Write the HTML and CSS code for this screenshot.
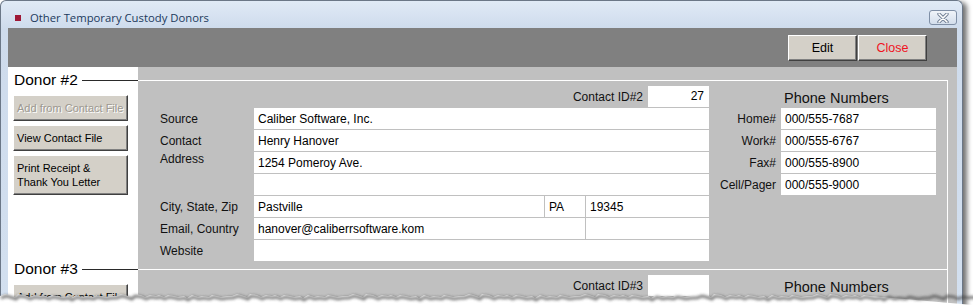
FILE: index.html
```html
<!DOCTYPE html>
<html lang="en">
<head>
    <meta charset="UTF-8">
    <meta name="viewport" content="width=device-width, initial-scale=1.0">
    <title>Other Temporary Custody Donors</title>
    <link rel="stylesheet" href="styles.css">
</head>
<body>
    <div class="window">
        <!-- Title bar -->
        <div class="titlebar">
            <span class="app-icon"></span>
            <span class="title">Other Temporary Custody Donors</span>
            <button class="win-close" type="button">
                <svg width="12" height="10" viewBox="0 0 12 10">
                    <path d="M2,1 L10,9 M10,1 L2,9" stroke="#6f7e93" stroke-width="3.4" stroke-linecap="round"/>
                    <path d="M2,1 L10,9 M10,1 L2,9" stroke="#fff" stroke-width="1.6" stroke-linecap="round"/>
                </svg>
            </button>
        </div>

        <div class="client">
            <!-- Toolbar -->
            <div class="toolbar">
                <button class="btn tool-btn" type="button">Edit</button>
                <button class="btn tool-btn btn-close" type="button">Close</button>
            </div>

            <!-- Donor #2 -->
            <div class="donor">
                <div class="donor-side">
                    <div class="donor-title">Donor #2</div>
                    <button class="btn side-btn" type="button" disabled>Add from Contact File</button>
                    <button class="btn side-btn" type="button">View Contact File</button>
                    <button class="btn side-btn tall" type="button">Print Receipt &amp;<br>Thank You Letter</button>
                </div>
                <div class="donor-main">
                    <div class="donor-box">
                        <div class="contact-area">
                            <div class="contact-id">
                                <span>Contact ID#2</span>
                                <div class="id-field">27</div>
                            </div>
                            <div class="fields">
                                <div class="lbl">Source</div>
                                <div class="field span3">Caliber Software, Inc.</div>
                                <div class="lbl">Contact</div>
                                <div class="field span3">Henry Hanover</div>
                                <div class="lbl addr">Address</div>
                                <div class="field span3">1254 Pomeroy Ave.</div>
                                <div class="field addr2"></div>
                                <div class="lbl">City, State, Zip</div>
                                <div class="field">Pastville</div>
                                <div class="field">PA</div>
                                <div class="field">19345</div>
                                <div class="lbl">Email, Country</div>
                                <div class="field span2">hanover@caliberrsoftware.kom</div>
                                <div class="field"></div>
                                <div class="lbl">Website</div>
                                <div class="field span3"></div>
                            </div>
                        </div>
                        <div class="phones">
                            <div class="phone-head">Phone Numbers</div>
                            <div class="plbl">Home#</div>
                            <div class="field">000/555-7687</div>
                            <div class="plbl">Work#</div>
                            <div class="field">000/555-6767</div>
                            <div class="plbl">Fax#</div>
                            <div class="field">000/555-8900</div>
                            <div class="plbl">Cell/Pager</div>
                            <div class="field">000/555-9000</div>
                        </div>
                    </div>
                </div>
            </div>

            <!-- Donor #3 (only its top shows above the torn edge) -->
            <div class="donor">
                <div class="donor-side">
                    <div class="donor-title">Donor #3</div>
                    <button class="btn side-btn" type="button">Add from Contact File</button>
                </div>
                <div class="donor-main">
                    <div class="donor-box">
                        <div class="contact-area">
                            <div class="contact-id">
                                <span>Contact ID#3</span>
                                <div class="id-field"></div>
                            </div>
                        </div>
                        <div class="phones">
                            <div class="phone-head">Phone Numbers</div>
                        </div>
                    </div>
                </div>
            </div>
        </div>
    </div>

    <!-- Torn edge of the screenshot -->
    <svg class="torn" width="973" height="16" viewBox="0 0 973 16">
        <defs>
            <filter id="soft" x="-5%" y="-100%" width="110%" height="300%">
                <feGaussianBlur stdDeviation="1.5"/>
            </filter>
        </defs>
        <path fill="#fff" d="M0,6 l5,-2 l4,1 l6,2 l3,-3 l7,1 l4,2 l5,-2 l6,1 l3,-1 l5,2 l4,-2 l6,1 l4,1 l6,-1 l3,2 l5,-3 l6,2 l4,-1 l7,1 l3,-2 l5,1 l4,1 l6,-1 l5,0 l5,-2 l4,1 l6,2 l3,-3 l7,1 l4,2 l5,-2 l6,1 l3,-1 l5,2 l4,-2 l6,1 l4,1 l6,-1 l3,2 l5,-3 l6,2 l4,-1 l7,1 l3,-2 l5,1 l4,1 l6,-1 l5,0 l5,-2 l4,1 l6,2 l3,-3 l7,1 l4,2 l5,-2 l6,1 l3,-1 l5,2 l4,-2 l6,1 l4,1 l6,-1 l3,2 l5,-3 l6,2 l4,-1 l7,1 l3,-2 l5,1 l4,1 l6,-1 l5,0 l5,-2 l4,1 l6,2 l3,-3 l7,1 l4,2 l5,-2 l6,1 l3,-1 l5,2 l4,-2 l6,1 l4,1 l6,-1 l3,2 l5,-3 l6,2 l4,-1 l7,1 l3,-2 l5,1 l4,1 l6,-1 l5,0 l5,-2 l4,1 l6,2 l3,-3 l7,1 l4,2 l5,-2 l6,1 l3,-1 l5,2 l4,-2 l6,1 l4,1 l6,-1 l3,2 l5,-3 l6,2 l4,-1 l7,1 l3,-2 l5,1 l4,1 l6,-1 l5,0 l5,-2 l4,1 l6,2 l3,-3 l7,1 l4,2 l5,-2 l6,1 l3,-1 l5,2 l4,-2 l6,1 l4,1 l6,-1 l3,2 l5,-3 l6,2 l4,-1 l7,1 l3,-2 l5,1 l4,1 l6,-1 l5,0 l5,-2 l4,1 l6,2 l3,-3 l7,1 l4,2 l5,-2 l6,1 l3,-1 l5,2 l4,-2 l6,1 l4,1 l6,-1 l3,2 l5,-3 l6,2 l4,-1 l7,1 l3,-2 l5,1 l4,1 l6,-1 l5,0 l5,-2 l4,1 l6,2 l3,-3 l7,1 l4,2 l5,-2 l6,1 l3,-1 l5,2 l4,-2 l6,1 L986,16 L0,16 Z"/>
        <path fill="none" stroke="#3c3c3c" stroke-width="2.5" opacity="0.75" filter="url(#soft)" transform="translate(1,2)" d="M0,6 l5,-2 l4,1 l6,2 l3,-3 l7,1 l4,2 l5,-2 l6,1 l3,-1 l5,2 l4,-2 l6,1 l4,1 l6,-1 l3,2 l5,-3 l6,2 l4,-1 l7,1 l3,-2 l5,1 l4,1 l6,-1 l5,0 l5,-2 l4,1 l6,2 l3,-3 l7,1 l4,2 l5,-2 l6,1 l3,-1 l5,2 l4,-2 l6,1 l4,1 l6,-1 l3,2 l5,-3 l6,2 l4,-1 l7,1 l3,-2 l5,1 l4,1 l6,-1 l5,0 l5,-2 l4,1 l6,2 l3,-3 l7,1 l4,2 l5,-2 l6,1 l3,-1 l5,2 l4,-2 l6,1 l4,1 l6,-1 l3,2 l5,-3 l6,2 l4,-1 l7,1 l3,-2 l5,1 l4,1 l6,-1 l5,0 l5,-2 l4,1 l6,2 l3,-3 l7,1 l4,2 l5,-2 l6,1 l3,-1 l5,2 l4,-2 l6,1 l4,1 l6,-1 l3,2 l5,-3 l6,2 l4,-1 l7,1 l3,-2 l5,1 l4,1 l6,-1 l5,0 l5,-2 l4,1 l6,2 l3,-3 l7,1 l4,2 l5,-2 l6,1 l3,-1 l5,2 l4,-2 l6,1 l4,1 l6,-1 l3,2 l5,-3 l6,2 l4,-1 l7,1 l3,-2 l5,1 l4,1 l6,-1 l5,0 l5,-2 l4,1 l6,2 l3,-3 l7,1 l4,2 l5,-2 l6,1 l3,-1 l5,2 l4,-2 l6,1 l4,1 l6,-1 l3,2 l5,-3 l6,2 l4,-1 l7,1 l3,-2 l5,1 l4,1 l6,-1 l5,0 l5,-2 l4,1 l6,2 l3,-3 l7,1 l4,2 l5,-2 l6,1 l3,-1 l5,2 l4,-2 l6,1 l4,1 l6,-1 l3,2 l5,-3 l6,2 l4,-1 l7,1 l3,-2 l5,1 l4,1 l6,-1 l5,0 l5,-2 l4,1 l6,2 l3,-3 l7,1 l4,2 l5,-2 l6,1 l3,-1 l5,2 l4,-2 l6,1 l4,1 l6,-1 l3,2 l5,-3 l6,2 l4,-1 l7,1 l3,-2 l5,1 l4,1 l6,-1 l5,0 l5,-2 l4,1 l6,2 l3,-3 l7,1 l4,2 l5,-2 l6,1 l3,-1 l5,2 l4,-2 l6,1"/>
    </svg>
</body>
</html>
```

FILE: styles.css
```css
/* Basic Reset */
body, html {
    margin: 0;
    padding: 0;
}

body {
    position: relative;
    height: 306px;
    overflow: hidden;
    background: #fff;
    font-family: "Liberation Sans", Arial, sans-serif;
    color: #111;
}

/* Window frame */
.window {
    width: 963px;
    box-sizing: border-box;
    border: 1px solid #6b7787;
    border-bottom: none;
    border-radius: 6px 6px 0 0;
    padding: 0 5px 0 7px;
    background: linear-gradient(#e0eaf6, #cedbec 28px, #d5e2f1);
    box-shadow: 4px 2px 5px rgba(0, 0, 0, 0.55);
}

.titlebar {
    height: 27px;
    box-sizing: border-box;
    padding: 6px 0 0 7px;
    display: flex;
    align-items: center;
}

.app-icon {
    width: 6px;
    height: 6px;
    background: #9e1836;
}

.title {
    margin-left: 9px;
    font-family: "Open Sans", "Noto Sans", sans-serif;
    font-size: 11.3px;
    color: #213a5c;
}

.win-close {
    margin-left: auto;
    width: 28px;
    height: 15px;
    padding: 0;
    border: 1px solid #7f8fa6;
    border-radius: 3px;
    background: linear-gradient(#f0f4f9, #d3deec);
    display: flex;
    align-items: center;
    justify-content: center;
}

/* Form area */
.client {
    background: #c0c0c0;
}

.toolbar {
    height: 39px;
    box-sizing: border-box;
    padding: 7px 30px 0 0;
    background: #808080;
    display: flex;
    justify-content: flex-end;
    align-items: flex-start;
    gap: 1px;
}

/* Access style 3D buttons */
.btn {
    box-sizing: border-box;
    background: #d4d0c8;
    border: 1px solid;
    border-color: #fff #404040 #404040 #fff;
    box-shadow: inset -1px -1px #808080;
    font-family: "Liberation Sans", Arial, sans-serif;
    color: #000;
    padding: 0;
    cursor: pointer;
}

.tool-btn {
    width: 69px;
    height: 26px;
    font-size: 12.5px;
}

.btn-close {
    color: #f0141e;
}

.donor {
    display: flex;
    height: 189px;
}

.donor-side {
    flex: 0 0 130px;
    background: #fff;
    display: flex;
    flex-direction: column;
    align-items: flex-start;
}

.donor-title {
    align-self: stretch;
    height: 26px;
    padding-left: 6px;
    display: flex;
    align-items: center;
    font-size: 15.5px;
    color: #000;
}

.donor-title::after {
    content: "";
    flex: 1;
    height: 1px;
    margin-left: 4px;
    background: #2a2a2a;
}

.side-btn {
    width: 115px;
    height: 26px;
    margin: 4px 0 0 5px;
    padding: 0 3px;
    font-size: 11px;
    text-align: left;
}

.donor-title + .side-btn {
    margin-top: 2px;
}

.side-btn:disabled {
    color: #9c9890;
    text-shadow: 1px 1px #fff;
}

.side-btn.tall {
    height: 40px;
    line-height: 14px;
}

.donor-main {
    flex: 1;
    min-width: 0;
    padding: 13px 9px 0 0;
}

/* keep the right rule running between donor boxes */
.donor + .donor .donor-main {
    background: linear-gradient(#fff, #fff) no-repeat right 9px top 0 / 1px 13px;
}

.donor-box {
    height: 176px;
    box-sizing: border-box;
    border-top: 1px solid #fff;
    border-right: 1px solid #fff;
    padding: 5px 12px 0 0;
    display: flex;
}

.contact-area {
    flex: 0 0 571px;
}

.contact-id {
    height: 21px;
    margin-bottom: 1px;
    display: flex;
    justify-content: flex-end;
    align-items: center;
    font-size: 12px;
}

.id-field {
    flex: 0 0 61px;
    height: 21px;
    box-sizing: border-box;
    margin-left: 5px;
    padding-right: 5px;
    background: #fff;
    line-height: 21px;
    text-align: right;
    color: #000;
}

.fields {
    display: grid;
    grid-template-columns: 115px 290px 40px 123px;
    grid-auto-rows: 21px;
    gap: 1px;
}

.lbl {
    padding-left: 22px;
    display: flex;
    align-items: center;
    font-size: 12px;
    white-space: nowrap;
}

.lbl.addr {
    grid-row: span 2;
    align-items: flex-start;
    line-height: 14px;
}

.field {
    background: #fff;
    padding-left: 4px;
    display: flex;
    align-items: center;
    font-size: 12px;
    color: #000;
    white-space: nowrap;
    overflow: hidden;
}

.span3 {
    grid-column: span 3;
}

.span2 {
    grid-column: span 2;
}

.addr2 {
    grid-column: 2 / span 3;
}

/* Phone numbers */
.phones {
    flex: 0 0 auto;
    margin-left: auto;
    display: grid;
    grid-template-columns: 67px 155px;
    grid-auto-rows: 21px;
    column-gap: 5px;
    row-gap: 1px;
    align-content: start;
}

.phone-head {
    grid-column: 2;
    align-self: end;
    padding-left: 3px;
    font-size: 14.5px;
    line-height: 17px;
    white-space: nowrap;
}

.plbl {
    display: flex;
    align-items: center;
    justify-content: flex-end;
    font-size: 12px;
    white-space: nowrap;
}

/* torn paper edge lies over the bottom of the picture */
.torn {
    position: absolute;
    left: 0;
    top: 290px;
}
```
